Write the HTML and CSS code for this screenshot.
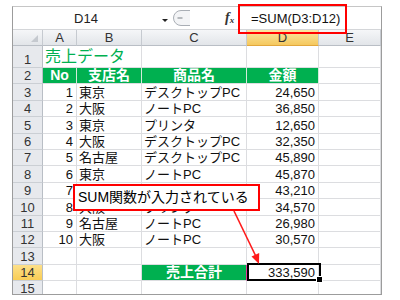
FILE: index.html
```html
<!DOCTYPE html>
<html lang="ja">
<head>
<meta charset="utf-8">
<title>売上データ</title>
<link rel="stylesheet" href="styles.css">
</head>
<body>
<div class="window">
  <div class="fbar">
    <div class="namebox">D14</div>
    <svg class="dd" width="12" height="22" viewBox="0 0 12 22"><path d="M3 12 L9 12 L6 15 Z" fill="#222"/></svg>
    <svg class="split" width="22" height="22" viewBox="0 0 22 22"><path d="M19 3.5 H10 A7.5 7.5 0 0 0 10 18.5 H19" fill="#f3f4f6" stroke="#a9aeb5" stroke-width="1"/><path d="M6.5 11 H11.5" stroke="#8c9198" stroke-width="1.2"/></svg>
    <div class="gap"></div>
    <div class="fx"><i>f</i><sub>x</sub></div>
    <div class="formula">=SUM(D3:D12)</div>
  </div>
  <div class="sheet">
    <div class="ch corner"><span class="tri"></span></div><div class="ch">A</div><div class="ch">B</div><div class="ch">C</div><div class="ch sel">D</div><div class="ch">E</div>

    <div class="rh r1">1</div><div class="c title">売上データ</div><div class="c"></div><div class="c"></div><div class="c"></div>

    <div class="rh">2</div><div class="c g">No</div><div class="c g">支店名</div><div class="c g">商品名</div><div class="c g">金額</div><div class="c"></div>

    <div class="rh">3</div><div class="c n">1</div><div class="c">東京</div><div class="c">デスクトップPC</div><div class="c n">24,650</div><div class="c"></div>
    <div class="rh">4</div><div class="c n">2</div><div class="c">大阪</div><div class="c">ノートPC</div><div class="c n">36,850</div><div class="c"></div>
    <div class="rh">5</div><div class="c n">3</div><div class="c">東京</div><div class="c">プリンタ</div><div class="c n">12,650</div><div class="c"></div>
    <div class="rh">6</div><div class="c n">4</div><div class="c">大阪</div><div class="c">デスクトップPC</div><div class="c n">32,350</div><div class="c"></div>
    <div class="rh">7</div><div class="c n">5</div><div class="c">名古屋</div><div class="c">デスクトップPC</div><div class="c n">45,890</div><div class="c"></div>
    <div class="rh">8</div><div class="c n">6</div><div class="c">東京</div><div class="c">ノートPC</div><div class="c n">45,870</div><div class="c"></div>
    <div class="rh">9</div><div class="c n">7</div><div class="c"></div><div class="c"></div><div class="c n">43,210</div><div class="c"></div>
    <div class="rh">10</div><div class="c n">8</div><div class="c">大阪</div><div class="c">プリンタ</div><div class="c n">34,570</div><div class="c"></div>
    <div class="rh">11</div><div class="c n">9</div><div class="c">名古屋</div><div class="c">ノートPC</div><div class="c n">26,980</div><div class="c"></div>
    <div class="rh">12</div><div class="c n">10</div><div class="c">大阪</div><div class="c">ノートPC</div><div class="c n">30,570</div><div class="c"></div>
    <div class="rh">13</div><div class="c"></div><div class="c"></div><div class="c"></div><div class="c"></div><div class="c"></div>
    <div class="rh sel">14</div><div class="c"></div><div class="c"></div><div class="c g total">売上合計</div><div class="c n">333,590</div><div class="c"></div>
    <div class="rh">15</div><div class="c"></div><div class="c"></div><div class="c"></div><div class="c"></div><div class="c"></div>
  </div>
</div>

<div class="active"><span class="handle"></span></div>
<div class="fbox"></div>
<div class="callout">SUM関数が入力されている</div>
<svg class="arrow" width="400" height="300" viewBox="0 0 400 300">
  <line x1="234" y1="211" x2="255.5" y2="255.5" stroke="#ff1a1a" stroke-width="1.6"/>
  <polygon points="259,264 259.2,253 251.5,256.6" fill="#ff1a1a"/>
</svg>
</body>
</html>
```

FILE: styles.css
```css
html, body {
  margin: 0;
  padding: 0;
}
body {
  position: relative;
  width: 400px;
  height: 300px;
  overflow: hidden;
  background: #fff;
  font-family: "Liberation Sans", "Noto Sans CJK JP", sans-serif;
  font-size: 13px;
  color: #111;
}
.window {
  margin: 6px 0 0 12px;
  width: 370px;
  height: 289px;
  box-sizing: border-box;
  border: 1px solid #9c9c9c;
  border-top-color: #c6c6c6;
  overflow: hidden;
  background: #fff;
}
.fbar {
  display: flex;
  align-items: center;
  height: 23px;
  box-sizing: border-box;
  border-bottom: 1px solid #d4d6d9;
  background: #fff;
}
.namebox {
  width: 146px;
  text-align: center;
  color: #222;
  font-size: 13px;
}
.dd, .split {
  flex: none;
  display: block;
}
.gap {
  width: 32px;
  flex: none;
}
.fx {
  width: 16px;
  flex: none;
  font-family: "Liberation Serif", serif;
  font-weight: bold;
  font-size: 14px;
  color: #333;
  line-height: 1;
}
.fx sub {
  font-size: 9px;
  font-style: italic;
  vertical-align: -1px;
}
.formula {
  padding-left: 10px;
  color: #111;
  font-size: 13px;
}
.sheet {
  display: grid;
  grid-template-columns: 30px 34px 65px 105px 72px 1fr;
  grid-template-rows: 16px 22px repeat(14, 16.4px);
}
.ch {
  background: linear-gradient(#f5f6f8, #e2e5e9);
  border-right: 1px solid #c6cad0;
  border-bottom: 1px solid #b9bec5;
  color: #333;
  text-align: center;
  line-height: 15px;
}
.ch.sel {
  background: linear-gradient(#fbe7a4, #f5c85e);
  border-bottom-color: #e2a73c;
}
.corner {
  position: relative;
}
.tri {
  position: absolute;
  right: 4px;
  bottom: 3px;
  width: 0;
  height: 0;
  border-left: 7px solid transparent;
  border-bottom: 7px solid #c5c9cf;
}
.rh {
  background: #e7e9ed;
  border-right: 1px solid #b9bec5;
  border-bottom: 1px solid #cbcfd4;
  color: #333;
  display: flex;
  align-items: flex-end;
  justify-content: center;
  line-height: 15px;
}
.rh.sel {
  background: linear-gradient(#fde08a, #f9cd55);
}
.c {
  border-right: 1px solid #dcdde0;
  border-bottom: 1px solid #dcdde0;
  display: flex;
  align-items: flex-end;
  padding: 0 2px 0 2px;
  white-space: nowrap;
  line-height: 15px;
  min-width: 0;
}
.c.n {
  justify-content: flex-end;
  padding-right: 3px;
}
.title {
  grid-column: span 2;
  color: #00b050;
  font-size: 16px;
  line-height: 20px;
  padding-left: 2px;
}
.g {
  background: #00b050;
  color: #fff;
  font-weight: bold;
  font-size: 14px;
  justify-content: center;
  border-right-color: #d4eadb;
}
.total {
  border-right: 1px solid #e23c9c;
}
.active {
  position: absolute;
  left: 247px;
  top: 263px;
  width: 74px;
  height: 18px;
  box-sizing: border-box;
  border: 2px solid #000;
}
.handle {
  position: absolute;
  right: -4px;
  bottom: -4px;
  width: 5px;
  height: 5px;
  background: #000;
  border: 1px solid #fff;
}
.fbox {
  position: absolute;
  left: 238px;
  top: 4px;
  width: 109px;
  height: 30px;
  box-sizing: border-box;
  border: 2px solid #ff0000;
}
.callout {
  position: absolute;
  left: 73px;
  top: 184px;
  width: 187px;
  height: 27px;
  box-sizing: border-box;
  border: 2px solid #ff0000;
  background: #fff;
  font-size: 14px;
  line-height: 23px;
  padding-left: 3px;
  color: #000;
  white-space: nowrap;
  overflow: hidden;
}
.arrow {
  position: absolute;
  left: 0;
  top: 0;
  pointer-events: none;
}
```
